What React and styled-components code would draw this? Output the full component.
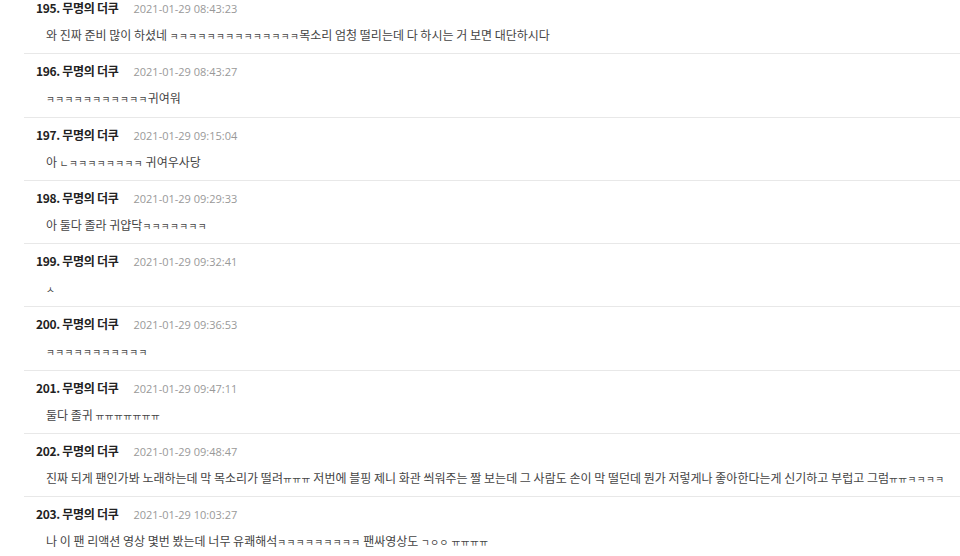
import React from 'react';
import styled, { createGlobalStyle } from 'styled-components';

const comments = [
  { no: 195, date: '2021-01-29 08:43:23', text: '와 진짜 준비 많이 하셨네 ㅋㅋㅋㅋㅋㅋㅋㅋㅋㅋㅋㅋㅋㅋ목소리 엄청 떨리는데 다 하시는 거 보면 대단하시다' },
  { no: 196, date: '2021-01-29 08:43:27', text: 'ㅋㅋㅋㅋㅋㅋㅋㅋㅋㅋㅋ귀여워' },
  { no: 197, date: '2021-01-29 09:15:04', text: '아 ㄴㅋㅋㅋㅋㅋㅋㅋㅋ 귀여우사당' },
  { no: 198, date: '2021-01-29 09:29:33', text: '아 둘다 졸라 귀얍닥ㅋㅋㅋㅋㅋㅋㅋ' },
  { no: 199, date: '2021-01-29 09:32:41', text: 'ㅅ' },
  { no: 200, date: '2021-01-29 09:36:53', text: 'ㅋㅋㅋㅋㅋㅋㅋㅋㅋㅋㅋ' },
  { no: 201, date: '2021-01-29 09:47:11', text: '둘다 졸귀 ㅠㅠㅠㅠㅠㅠㅠ' },
  { no: 202, date: '2021-01-29 09:48:47', text: '진짜 되게 팬인가봐 노래하는데 막 목소리가 떨려ㅠㅠㅠ 저번에 블핑 제니 화관 씌워주는 짤 보는데 그 사람도 손이 막 떨던데 뭔가 저렇게나 좋아한다는게 신기하고 부럽고 그럼ㅠㅠㅋㅋㅋㅋ' },
  { no: 203, date: '2021-01-29 10:03:27', text: '나 이 팬 리액션 영상 몇번 봤는데 너무 유쾌해석ㅋㅋㅋㅋㅋㅋㅋㅋㅋ 팬싸영상도 ㄱㅇㅇ ㅠㅠㅠㅠ' },
];

const GlobalStyle = createGlobalStyle`
  html, body {
    margin: 0;
    padding: 0;
    background: #fff;
    overflow: hidden;
  }
  body {
    font-family: "Noto Sans CJK KR", "Noto Sans", sans-serif;
  }
`;

const Page = styled.div`
  width: 960px;
  height: 556px;
  overflow: hidden;
`;

// 스크롤된 상태라 첫 댓글이 살짝 잘려 보임
const CommentList = styled.ul`
  list-style: none;
  margin: -10px 0 0 24px;
  padding: 0;
`;

const CommentItem = styled.li`
  border-top: 1px solid #e8e8e8;
  padding: 8px 12px 9px;
  height: 45.25px;
  box-sizing: content-box;
`;

const Header = styled.div`
  display: flex;
  align-items: baseline;
  line-height: 18px;
  height: 18px;
`;

const Writer = styled.span`
  font-size: 12px;
  font-weight: 700;
  color: #222;
  letter-spacing: -0.3px;
`;

const DateText = styled.span`
  margin-left: 15px;
  font-size: 11px;
  color: #999;
  font-family: "Open Sans", "Noto Sans", sans-serif;
`;

const Body = styled.div`
  margin-top: 9px;
  padding-left: 10px;
  font-size: 12px;
  line-height: 18px;
  color: #444;
  white-space: nowrap;
`;

// 자모(ㅋ, ㅠ 등)는 원본 폰트에서 작고 폭이 좁음
const Jamo = styled.span`
  font-size: 9.5px;
  letter-spacing: 0.5px;
`;

const renderText = (text) =>
  text.split(/([ㄱ-ㅎㅏ-ㅣ]+)/).map((part, i) =>
    /^[ㄱ-ㅎㅏ-ㅣ]+$/.test(part) ? <Jamo key={i}>{part}</Jamo> : part
  );

const App = () => {
  return (
    <Page>
      <GlobalStyle />
      <CommentList>
        {comments.map((c) => (
          <CommentItem key={c.no}>
            <Header>
              <Writer>{c.no}. 무명의 더쿠</Writer>
              <DateText>{c.date}</DateText>
            </Header>
            <Body>{renderText(c.text)}</Body>
          </CommentItem>
        ))}
      </CommentList>
    </Page>
  );
};

export default App;
